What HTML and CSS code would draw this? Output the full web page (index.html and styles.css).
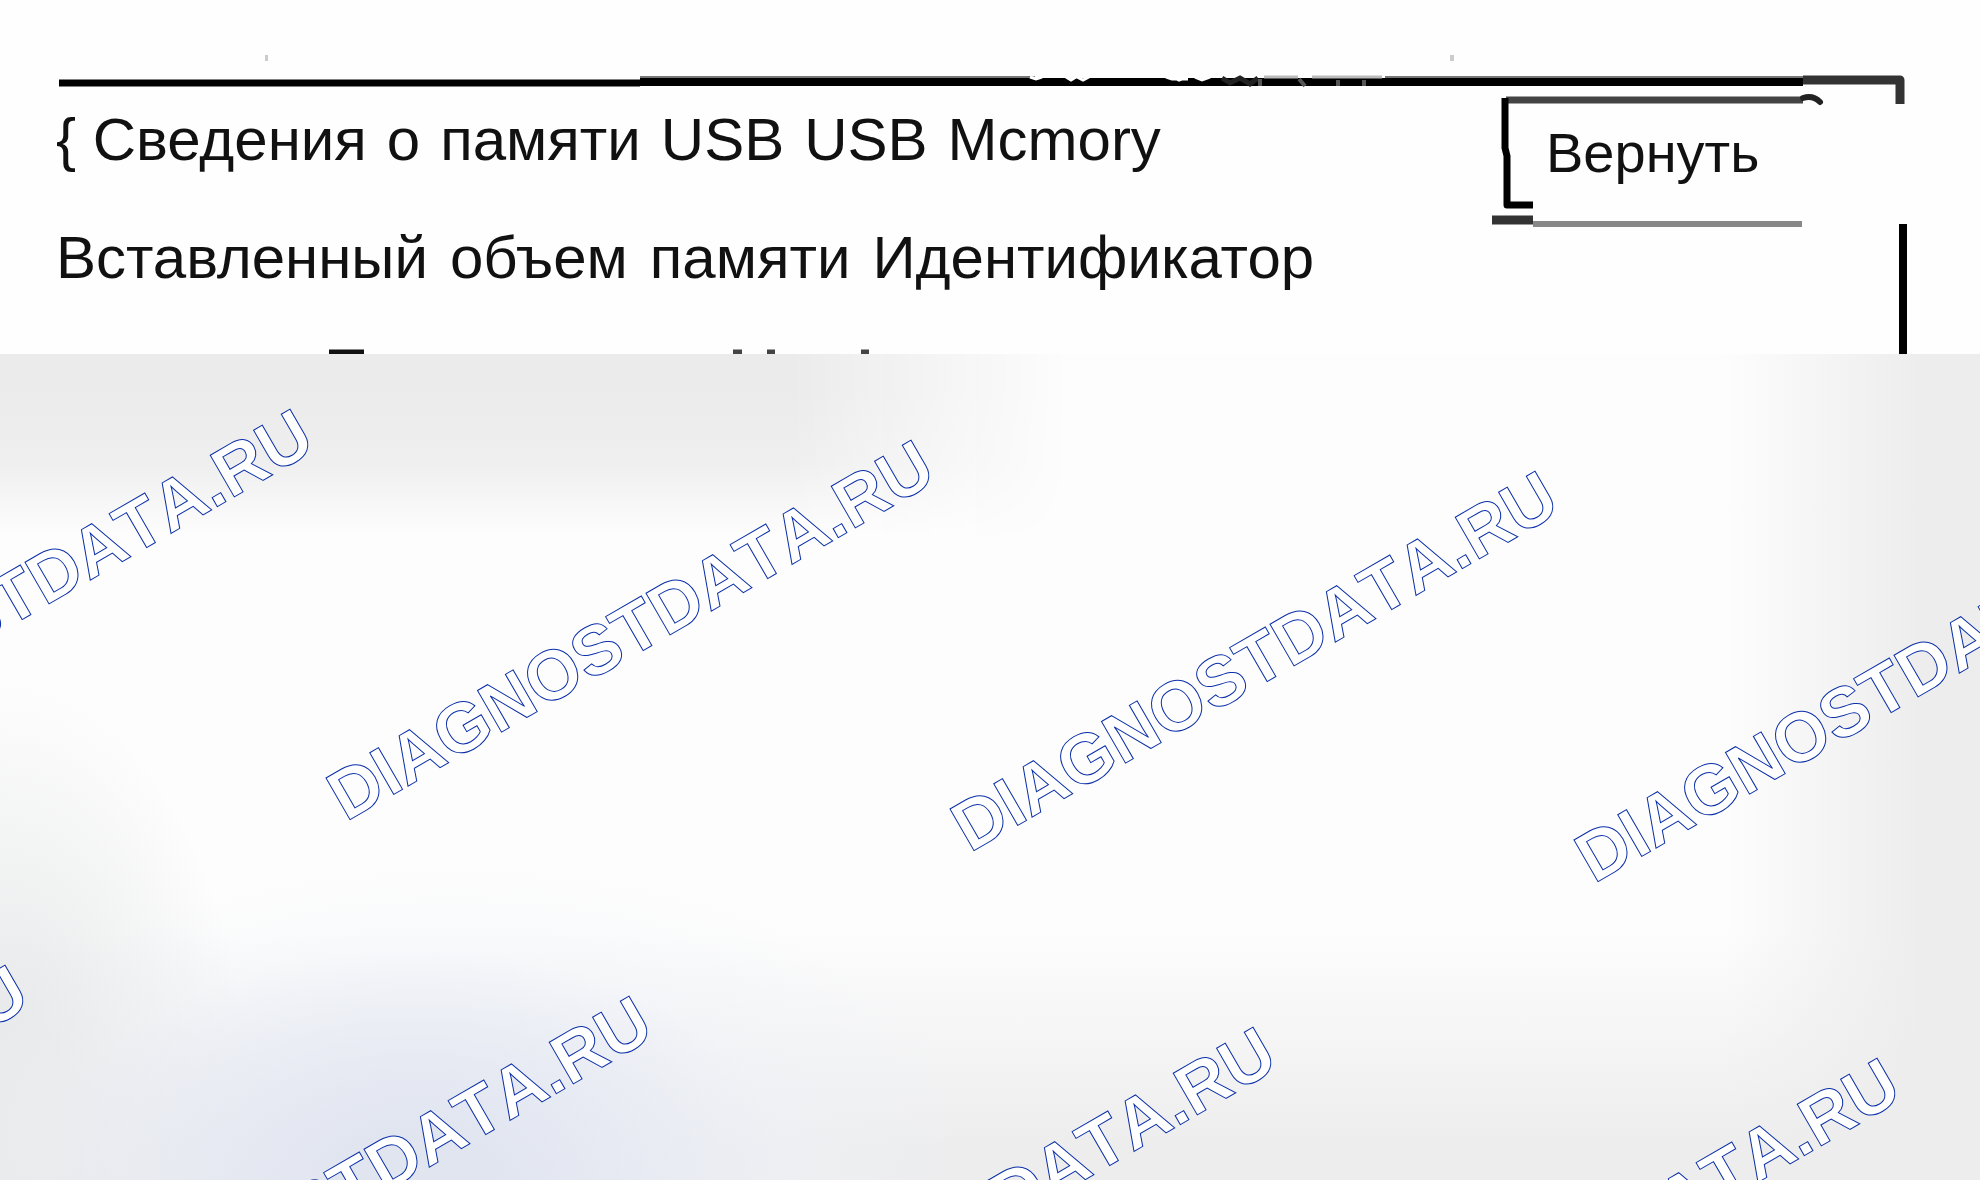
FILE: index.html
```html
<!DOCTYPE html>
<html lang="ru">
<head>
<meta charset="utf-8">
<title>Сведения о памяти USB</title>
<meta name="viewport" content="width=device-width, initial-scale=1">
<link rel="stylesheet" href="styles.css">
</head>
<body>
<main class="page">
  <section class="screen">
    <svg class="frame" viewBox="0 0 1980 354" preserveAspectRatio="none" aria-hidden="true">
      <path d="M59 83H640" stroke="#000" stroke-width="7"/>
      <path d="M640 82H1803" stroke="#000" stroke-width="8"/>
      <path d="M640 77H1035M1385 77H1803" stroke="#777" stroke-width="2"/>
      <path d="M1030 77l6 2 6-2m24 0l5 3 5-3m90 0l6 2h16m-111-2l6 3 6-3m84 0l6 3 8-3m8 0l7 3 8-3" stroke="#fff" stroke-width="3"/>
      <path d="M1222 78l8 5 10-5 10 6 8-6" stroke="#222" stroke-width="5"/>
      <path d="M1264 77h34M1312 77h70" stroke="#bbb" stroke-width="3"/>
      <path d="M1260 79v7M1299 79l6 7M1338 80v6M1364 80v6" stroke="#555" stroke-width="4"/>
      <path d="M1803 80H1900V104" stroke="#333" stroke-width="9" stroke-linejoin="round"/>
      <path d="M1903 224V354" stroke="#000" stroke-width="8"/>
      <path d="M1506 100H1803" stroke="#444" stroke-width="7"/>
      <path d="M1803 98q10-3 17 4" stroke="#222" stroke-width="6" stroke-linecap="round"/>
      <path d="M1505 98V148L1507 156V205H1533" stroke="#000" stroke-width="7" stroke-linejoin="round"/>
      <path d="M1492 220H1533" stroke="#333" stroke-width="9"/>
      <path d="M1533 224H1802" stroke="#888" stroke-width="6"/>
      <path d="M329 352H364" stroke="#111" stroke-width="5"/>
      <path d="M733 352h9M767 352h8M861 352h8" stroke="#444" stroke-width="5"/>
      <path d="M265 58h3M1450 58h4" stroke="#ccc" stroke-width="6"/>
    </svg>
    <header class="head">
      <h1 class="line title"><span>{ Сведения</span><span>о</span><span>памяти</span><span>USB</span><span>USB</span><span>Mcmory</span></h1>
      <button class="back" type="button">Вернуть</button>
    </header>
    <p class="line info"><span>Вставленный</span><span>объем</span><span>памяти</span><span>Идентификатор</span></p>
  </section>
  <section class="backdrop">
    <svg class="marks" viewBox="0 354 1980 826" preserveAspectRatio="xMinYMin slice" aria-hidden="true">
      <g class="mark">
        <text transform="translate(-275 791) rotate(-30)">DIAGNOSTDATA.RU</text>
        <text transform="translate(346 822) rotate(-30)">DIAGNOSTDATA.RU</text>
        <text transform="translate(970 853) rotate(-30)">DIAGNOSTDATA.RU</text>
        <text transform="translate(1594 884) rotate(-30)">DIAGNOSTDATA.RU</text>
        <text transform="translate(-560 1347) rotate(-30)">DIAGNOSTDATA.RU</text>
        <text transform="translate(64 1378) rotate(-30)">DIAGNOSTDATA.RU</text>
        <text transform="translate(688 1409) rotate(-30)">DIAGNOSTDATA.RU</text>
        <text transform="translate(1312 1440) rotate(-30)">DIAGNOSTDATA.RU</text>
      </g>
    </svg>
  </section>
</main>
</body>
</html>
```
FILE: styles.css
```css
* { box-sizing: border-box; }

body {
  margin: 0;
  background: #fdfdfd;
  color: #111;
  font-family: "Liberation Sans", Arial, sans-serif;
}

.page {
  display: flex;
  flex-direction: column;
  min-height: 100vh;
}

.screen {
  position: relative;
  height: 354px;
  padding: 104px 80px 0 56px;
  background: #fefefe;
}

.frame {
  position: absolute;
  inset: 0;
  width: 100%;
  height: 100%;
  fill: none;
}

.head {
  display: flex;
  justify-content: space-between;
  align-items: flex-start;
}

.line {
  display: flex;
  gap: 20px;
  margin: 0;
  font-size: 60px;
  font-weight: 400;
  line-height: 72px;
  white-space: nowrap;
}

.info {
  gap: 22px;
  margin-top: 8px;
}

.back {
  width: 396px;
  height: 110px;
  padding: 0 0 12px 42px;
  border: 0;
  background: none;
  color: #111;
  font: 56px/96px "Liberation Sans", Arial, sans-serif;
  text-align: left;
}

.backdrop {
  position: relative;
  flex: 1;
  overflow: hidden;
  background:
    radial-gradient(ellipse 19% 28% at 21% 100%, #e1e5f0 20%, #e1e5f000),
    radial-gradient(ellipse 26% 32% at 23% 94%, #eff2f8 10%, #eff2f800),
    radial-gradient(ellipse 13% 56% at 0% 96%, #e9eaeb 30%, #e9eaeb00),
    linear-gradient(to bottom, #ededee00 70%, #ededee 96%),
    linear-gradient(to right, #ededed00 87%, #ededed 97%),
    #fdfdfd;
}

/* soft grey band behind the upper left part */
.backdrop::before {
  content: "";
  position: absolute;
  inset: 0 46% 78% 0;
  background: linear-gradient(to bottom, #ebebeb 20%, #efefef 60%, #fdfdfd);
  mask-image: linear-gradient(to right, #000 74%, transparent);
}

.marks {
  position: absolute;
  inset: 0;
  width: 100%;
  height: 100%;
}

.mark {
  fill: #fff;
  stroke: #0a2fa8;
  stroke-width: 1px;
  font-family: "Liberation Sans", Arial, sans-serif;
  font-size: 70px;
  font-weight: 700;
  font-kerning: none;
}
```
